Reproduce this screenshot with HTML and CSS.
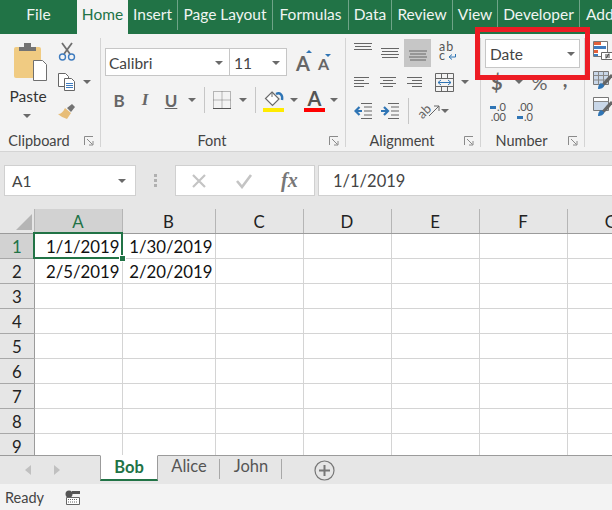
FILE: index.html
```html
<!DOCTYPE html>
<html lang="en">
<head>
    <meta charset="UTF-8">
    <title>Book1 - Excel</title>
    <link rel="stylesheet" href="styles.css">
</head>
<body>
    <nav class="tabs">
        <div class="tab tab-file">File</div>
        <div class="tab tab-home">Home</div>
        <div class="tab t-insert">Insert</div>
        <div class="tab t-layout">Page Layout</div>
        <div class="tab t-formulas">Formulas</div>
        <div class="tab t-data">Data</div>
        <div class="tab t-review">Review</div>
        <div class="tab t-view">View</div>
        <div class="tab t-dev">Developer</div>
        <div class="tab t-add">Add-ins</div>
    </nav>

    <section class="ribbon">
        <div class="group g-clipboard">
            <div class="group-body clip-body">
                <div class="paste">
                    <svg width="56" height="40" viewBox="0 0 56 40">
                        <rect x="14" y="6" width="27" height="31" rx="2" fill="#f0cb82"/>
                        <path d="M19 10V6h5V2h7v4h5v4z" fill="#737373"/>
                        <path d="M33.500 19.500h9l4 4v16h-13z" fill="#fff" stroke="#6f6f6f"/>
                    </svg>
                    <span class="paste-label">Paste</span>
                    <i class="caret"></i>
                </div>
                <div class="clip-tools">
                    <svg width="18" height="19" viewBox="0 0 18 19" fill="none">
                        <path d="M4 1l8 11M14 1L6 12" stroke="#6f6f6f" stroke-width="1.800"/>
                        <circle cx="4.500" cy="15" r="3" stroke="#3f7cbf" stroke-width="1.400"/>
                        <circle cx="13.500" cy="15" r="3" stroke="#3f7cbf" stroke-width="1.400"/>
                    </svg>
                    <div class="copy-row">
                        <svg width="18" height="18" viewBox="0 0 18 18" fill="#fff">
                            <path d="M.500.500h7l3 3v10h-10z" stroke="#666"/>
                            <path d="M6.500 5.500h7l3 3v9h-10z" stroke="#666"/>
                            <path d="M8 10.500h7M8 12.500h7M8 14.500h7" stroke="#3f7cbf" fill="none"/>
                        </svg>
                        <i class="caret copy-caret"></i>
                    </div>
                    <svg class="painter" width="18" height="16" viewBox="0 0 18 16">
                        <path d="M9 5l5-4 3 3-4 5z" fill="#737373"/>
                        <path d="M7 5l6 5-4 6c-3-1-7-3-9-5 3 0 5-2 7-6z" fill="#e7bd78"/>
                    </svg>
                </div>
            </div>
            <div class="group-label"><span>Clipboard</span>
                <svg class="launcher" width="10" height="10" viewBox="0 0 10 10" fill="none" stroke="#8a8a8a"><path d="M.500 9V.500H9M3 3l5.500 5.500M5 9h4V5"/></svg>
            </div>
        </div>

        <div class="group g-font">
            <div class="group-body">
                <div class="font-row">
                    <div class="combo combo-name"><span>Calibri</span><i class="caret"></i></div>
                    <div class="combo combo-size"><span>11</span><i class="caret"></i></div>
                    <div class="grow-a">A<i class="mini-up"></i></div>
                    <div class="shrink-a">A<i class="mini-down"></i></div>
                </div>
                <div class="style-row">
                    <b class="letter">B</b>
                    <em class="letter">I</em>
                    <u class="letter">U</u>
                    <i class="caret u-caret"></i>
                    <span class="sep s-one"></span>
                    <svg class="borders" width="18" height="18" viewBox="0 0 18 18" fill="none" stroke="#777" stroke-dasharray="1 1"><path d="M.500.500h17v17h-17zM9 .500v17M.500 9h17"/><path d="M0 17.500h18" stroke-dasharray="none" stroke="#555"/></svg>
                    <i class="caret b-caret"></i>
                    <span class="sep s-two"></span>
                    <div class="fill-icon">
                        <svg width="22" height="17" viewBox="0 0 22 17" fill="none">
                            <path d="M9 1l7 7-6.500 6.500L2.500 7.500z" fill="#fff" stroke="#6a6a6a" stroke-width="1.200"/>
                            <path d="M9 1v5" stroke="#6a6a6a"/>
                            <path d="M13 3c4-2 7 1 6 6" stroke="#2f75b5" stroke-width="2.400"/>
                        </svg>
                        <span class="bar bar-yellow"></span>
                    </div>
                    <i class="caret f-caret"></i>
                    <div class="color-a">A<span class="bar bar-red"></span></div>
                    <i class="caret c-caret"></i>
                </div>
            </div>
            <div class="group-label"><span>Font</span>
                <svg class="launcher" width="10" height="10" viewBox="0 0 10 10" fill="none" stroke="#8a8a8a"><path d="M.500 9V.500H9M3 3l5.500 5.500M5 9h4V5"/></svg>
            </div>
        </div>

        <div class="group g-align">
            <div class="group-body align-body">
                <div class="align-row row-top">
                    <svg width="18" height="16" viewBox="0 0 18 16" stroke="#666"><path d="M0 .500h18M1 3.500h16M0 6.500h18"/></svg>
                    <svg class="gap-9" width="18" height="16" viewBox="0 0 18 16" stroke="#666"><path d="M0 5.500h18M1 8.500h16M0 11.500h18M1 14.500h16"/></svg>
                    <div class="active-btn">
                        <svg width="18" height="16" viewBox="0 0 18 16" stroke="#666"><path d="M0 6h18M1 9h16M0 12h18M1 15h16"/></svg>
                    </div>
                    <div class="wrap-icon">
                        <span class="wrap-text">ab<br>c</span>
                        <svg width="8" height="6" viewBox="0 0 8 6" fill="none" stroke="#2f75b5"><path d="M7.500 0v3h-6M4 .500L1 3l3 2.500"/></svg>
                    </div>
                </div>
                <div class="align-row row-mid">
                    <svg width="15" height="11" viewBox="0 0 15 11" stroke="#666"><path d="M0 .500h15M0 3.500h10M0 6.500h15M0 9.500h10"/></svg>
                    <svg class="gap-12" width="16" height="11" viewBox="0 0 16 11" stroke="#666"><path d="M0 .500h16M3 3.500h10M0 6.500h16M3 9.500h10"/></svg>
                    <svg class="gap-12" width="15" height="11" viewBox="0 0 15 11" stroke="#666"><path d="M0 .500h15M5 3.500h10M0 6.500h15M5 9.500h10"/></svg>
                    <svg class="gap-13" width="19" height="19" viewBox="0 0 19 19" fill="none"><path d="M.500.500h18v18H.500zM.500 5.500h18M.500 13.500h18M6.500.500v5M12.500.500v5M6.500 13.500v5M12.500 13.500v5" stroke="#666"/><path d="M3 9.500h13M6 7L3 9.500 6 12M13 7l3 2.500-3 2.500" stroke="#2f75b5"/></svg>
                    <i class="caret merge-caret"></i>
                </div>
                <div class="align-row row-low">
                    <svg width="18" height="16" viewBox="0 0 18 16" fill="none"><path d="M7 .500h11M10 4h8M10 8h8M10 12h8M7 15.500h11" stroke="#666"/><path d="M8 8H2M5.500 4L1.500 8l4 4" stroke="#2f75b5" stroke-width="2.200"/></svg>
                    <svg class="gap-9" width="18" height="16" viewBox="0 0 18 16" fill="none"><path d="M7 .500h11M10 4h8M10 8h8M10 12h8M7 15.500h11" stroke="#666"/><path d="M0 8h6M3 4l4 4-4 4" stroke="#2f75b5" stroke-width="2.200"/></svg>
                    <span class="sep s-three"></span>
                    <div class="orient-icon"><span class="orient-text">ab</span>
                        <svg width="12" height="12" viewBox="0 0 12 12" fill="none" stroke="#666"><path d="M1 11L11 1M6 1h5v5"/></svg>
                    </div>
                    <i class="caret orient-caret"></i>
                </div>
            </div>
            <div class="group-label"><span>Alignment</span>
                <svg class="launcher" width="10" height="10" viewBox="0 0 10 10" fill="none" stroke="#8a8a8a"><path d="M.500 9V.500H9M3 3l5.500 5.500M5 9h4V5"/></svg>
            </div>
        </div>

        <div class="group g-number">
            <div class="group-body">
                <div class="combo combo-format"><span>Date</span><i class="caret"></i></div>
                <div class="num-row">
                    <span class="num-sym sym-dollar">$</span>
                    <i class="caret dollar-caret"></i>
                    <span class="num-sym sym-pct">%</span>
                    <span class="num-sym sym-comma">,</span>
                </div>
                <div class="dec-row">
                    <div class="dec-icon"><span class="dec-line"><i class="arrow-left"></i>.0</span><span class="dec-line">.00</span></div>
                    <div class="dec-icon dec-two"><span class="dec-line">.00</span><span class="dec-line"><i class="arrow-right"></i>.0</span></div>
                </div>
            </div>
            <div class="group-label"><span>Number</span>
                <svg class="launcher" width="10" height="10" viewBox="0 0 10 10" fill="none" stroke="#8a8a8a"><path d="M.500 9V.500H9M3 3l5.500 5.500M5 9h4V5"/></svg>
            </div>
        </div>

        <div class="g-styles">
            <svg class="st-cond" width="20" height="20" viewBox="0 0 20 20" fill="none"><path d="M.500.500h14v15H.500z" fill="#fff" stroke="#777"/><path d="M1 1h7v3H1z" fill="#e2603a"/><path d="M1 5h12v3H1z" fill="#3f7cbf"/><path d="M1 9h4v3H1z" fill="#e2603a"/><path d="M1 13h4v2H1z" fill="#3f7cbf"/><path d="M8.500 11.500h11v7h-11z" fill="#fff" stroke="#666"/><path d="M12 14h5M12 16h5M16 12.500l-3 5" stroke="#444"/></svg>
            <svg class="st-table" width="20" height="18" viewBox="0 0 20 18" fill="none"><path d="M.500.500h15v13H.500z" fill="#c9d7e8" stroke="#777"/><path d="M.500 4.500h15M.500 9h15M5.500.500v13M10.500.500v13" stroke="#888"/><path d="M8 14l6-7 4-4 2 2-4 5-6 6z" fill="#666"/><path d="M5 18c0-3 1-5 3-6l3 2c0 3-3 4-6 4z" fill="#2f75b5"/></svg>
            <svg class="st-cell" width="20" height="20" viewBox="0 0 20 20" fill="none"><path d="M.500.500h15v13H.500z" fill="#c9d7e8" stroke="#777"/><path d="M1 1h14v3H1z" fill="#fff"/><path d="M.500 4.500h15" stroke="#888"/><path d="M8 15l6-7 4-4 2 2-4 5-6 6z" fill="#666"/><path d="M5 19c0-3 1-5 3-6l3 2c0 3-3 4-6 4z" fill="#2f75b5"/></svg>
        </div>
    </section>

    <!-- highlight drawn on top of the ribbon -->
    <div class="red-box"></div>

    <section class="formula-bar">
        <div class="name-box"><span>A1</span><i class="caret"></i></div>
        <div class="grip"></div>
        <div class="fx-buttons">
            <svg width="16" height="16" viewBox="0 0 16 16" stroke="#c4c4c4" stroke-width="2.200"><path d="M2 2l12 12M14 2L2 14"/></svg>
            <svg width="18" height="16" viewBox="0 0 18 16" fill="none" stroke="#c4c4c4" stroke-width="2.600"><path d="M2 8l5 6L16 2"/></svg>
            <span class="fx">fx</span>
        </div>
        <div class="formula-input">1/1/2019</div>
    </section>

    <section class="sheet">
        <table class="cells">
            <tr class="col-heads">
                <th class="corner"><svg width="18" height="18" viewBox="0 0 18 18"><path d="M17 1v16H1z" fill="#b5b5b5"/></svg></th>
                <th class="picked">A</th><th class="wide">B</th><th>C</th><th>D</th><th>E</th><th>F</th><th>G</th>
            </tr>
            <tr><th class="picked row-head">1</th><td class="selected">1/1/2019<i class="handle"></i></td><td>1/30/2019</td><td></td><td></td><td></td><td></td><td></td></tr>
            <tr><th class="row-head">2</th><td>2/5/2019</td><td>2/20/2019</td><td></td><td></td><td></td><td></td><td></td></tr>
            <tr><th class="row-head">3</th><td></td><td></td><td></td><td></td><td></td><td></td><td></td></tr>
            <tr><th class="row-head">4</th><td></td><td></td><td></td><td></td><td></td><td></td><td></td></tr>
            <tr><th class="row-head">5</th><td></td><td></td><td></td><td></td><td></td><td></td><td></td></tr>
            <tr><th class="row-head">6</th><td></td><td></td><td></td><td></td><td></td><td></td><td></td></tr>
            <tr><th class="row-head">7</th><td></td><td></td><td></td><td></td><td></td><td></td><td></td></tr>
            <tr><th class="row-head">8</th><td></td><td></td><td></td><td></td><td></td><td></td><td></td></tr>
            <tr><th class="row-head">9</th><td></td><td></td><td></td><td></td><td></td><td></td><td></td></tr>
        </table>
    </section>

    <section class="sheet-tabs">
        <i class="nav-left"></i>
        <i class="nav-right"></i>
        <div class="sheet-tab current">Bob</div>
        <div class="sheet-tab alice">Alice</div>
        <div class="sheet-tab john">John</div>
        <svg class="add-sheet" width="21" height="21" viewBox="0 0 21 21" fill="none" stroke="#777"><circle cx="10.500" cy="10.500" r="9.500" stroke-width="1.200"/><path d="M10.500 5v11M5 10.500h11" stroke-width="2"/></svg>
    </section>

    <footer class="status">
        <span>Ready</span>
        <svg width="16" height="15" viewBox="0 0 16 15"><circle cx="4" cy="4" r="3.500" fill="#555"/><path d="M7 1h8v3H7z" fill="#555"/><path d="M1.500 7.500h13v7h-13z" fill="#fff" stroke="#666"/><path d="M3 9.500h10M3 12h10" stroke="#666" stroke-dasharray="1 1"/></svg>
    </footer>
</body>
</html>
```

FILE: styles.css
```css
* {
    box-sizing: border-box;
}
body {
    margin: 0;
    width: 612px;
    height: 510px;
    overflow: hidden;
    position: relative;
    background: #e6e6e6;
    font-family: Lato, 'Open Sans', sans-serif;
    font-size: 15px;
    color: #444;
}
i {
    font-style: normal;
}

/* tabs */
.tabs {
    display: flex;
    height: 34px;
    background: #217346;
    color: #f0f5f2;
    white-space: nowrap;
    overflow: hidden;
}
.tab {
    flex: none;
    height: 30px;
    line-height: 29px;
    text-align: center;
    border-right: 1px solid #6fa488;
    font-size: 15.500px;
}
.tab-file { width: 77px; border: 0; height: 34px; }
.tab-home { width: 51px; height: 34px; background: #f3f3f3; color: #217346; border: 0; }
.t-insert { width: 50px; }
.t-layout { width: 95px; }
.t-formulas { width: 76px; }
.t-data { width: 43px; }
.t-review { width: 61px; }
.t-view { width: 45px; }
.t-dev { width: 82px; }
.t-add { width: 60px; border: 0; text-align: left; padding-left: 6px; }

/* ribbon */
.ribbon {
    display: flex;
    height: 118px;
    padding-top: 4px;
    background: #f3f3f3;
    border-bottom: 1px solid #d4d4d4;
    overflow: hidden;
}
.group {
    flex: none;
    display: flex;
    flex-direction: column;
    height: 109px;
    border-right: 1px solid #d4d4d4;
}
.group-body {
    flex: 1;
}
.group-label {
    display: grid;
    grid-template-columns: 1fr auto 1fr;
    align-items: center;
    height: 12px;
    padding-right: 22px;
    font-size: 14.500px;
    line-height: 12px;
}
.group-label span {
    grid-column: 2;
}
.launcher {
    grid-column: 3;
    justify-self: end;
    margin-right: -16px;
}
.g-clipboard { width: 101px; }
.g-font { width: 245px; }
.g-align { width: 135px; }
.g-number { width: 104px; }
.g-styles {
    flex: none;
    width: 28px;
    padding: 3px 0 0 8px;
}
.g-styles svg {
    display: block;
}
.st-table { margin-top: 10px; }
.st-cell { margin-top: 8px; }
.caret {
    display: block;
    flex: none;
    width: 0;
    height: 0;
    border-left: 4px solid transparent;
    border-right: 4px solid transparent;
    border-top: 4px solid #6a6a6a;
}

/* clipboard */
.clip-body {
    display: flex;
}
.paste {
    display: flex;
    flex-direction: column;
    align-items: center;
    width: 56px;
    margin-top: 3px;
}
.paste svg {
    margin-bottom: 5px;
}
.paste-label {
    font-size: 15.500px;
    line-height: 20px;
    color: #333;
}
.paste .caret {
    margin-top: 8px;
    margin-left: -2px;
}
.clip-tools {
    margin: 4px 0 0 2px;
}
.clip-tools svg {
    display: block;
}
.copy-row {
    display: flex;
    align-items: center;
    margin-top: 12px;
}
.copy-caret {
    margin-left: 7px;
}
.painter {
    margin-top: 12px;
}

/* font */
.font-row {
    display: flex;
    margin: 10px 0 0 4px;
}
.combo {
    display: flex;
    align-items: center;
    justify-content: space-between;
    height: 28px;
    padding: 1px 6px 0 3px;
    background: #fff;
    border: 1px solid #c6c6c6;
    font-size: 15.500px;
    color: #444;
}
.combo-name { width: 125px; }
.combo-size { width: 57px; padding-left: 4px; border-left: 0; }
.grow-a, .shrink-a {
    position: relative;
    font-weight: bold;
    color: #666;
    line-height: 1;
}
.grow-a {
    margin: 5px 0 0 9px;
    font-size: 20px;
}
.shrink-a {
    margin: 8px 0 0 8px;
    font-size: 16px;
}
.mini-up, .mini-down {
    position: absolute;
    right: -2px;
    width: 0;
    height: 0;
    border-left: 3px solid transparent;
    border-right: 3px solid transparent;
}
.mini-up { top: -3px; border-bottom: 3px solid #2f75b5; }
.mini-down { top: -2px; border-top: 3px solid #2f75b5; }
.style-row {
    display: flex;
    align-items: center;
    height: 26px;
    margin: 11px 0 0 5px;
}
.letter {
    width: 26px;
    text-align: center;
    font-family: 'Liberation Serif', serif;
    font-size: 17px;
    font-weight: bold;
    color: #666;
}
.style-row b.letter,
.style-row u.letter {
    font-family: Lato, sans-serif;
}
.u-caret { margin-left: 4px; }
.sep {
    flex: none;
    display: block;
    width: 1px;
    height: 26px;
    background: #c6c6c6;
}
.s-one { margin-left: 8px; }
.borders { margin-left: 8px; }
.b-caret { margin-left: 8px; }
.s-two { margin-left: 8px; }
.fill-icon {
    display: flex;
    flex-direction: column;
    margin-left: 7px;
    margin-top: 2px;
}
.bar {
    display: block;
    height: 4px;
}
.bar-yellow {
    width: 21px;
    background: #ffeb00;
}
.f-caret { margin-left: 5px; }
.color-a {
    width: 21px;
    margin-left: 6px;
    font-size: 20px;
    line-height: 18px;
    font-weight: bold;
    text-align: center;
    color: #555;
}
.bar-red {
    background: #f00;
    margin-top: 1px;
}
.c-caret { margin-left: 5px; }

/* alignment */
.align-body {
    padding-left: 8px;
}
.align-row {
    display: flex;
}
.align-row svg {
    flex: none;
}
.gap-9 { margin-left: 9px; }
.gap-12 { margin-left: 11px; }
.gap-13 { margin-left: 13px; }
.row-top {
    height: 30px;
    margin-top: 1px;
}
.row-top > svg {
    margin-top: 4px;
}
.active-btn {
    width: 27px;
    height: 28px;
    margin-left: 5px;
    padding: 6px 0 0 5px;
    background: #c6c6c6;
}
.wrap-icon {
    display: flex;
    align-items: flex-end;
    height: 17px;
    margin: 4px 0 0 8px;
}
.wrap-text {
    width: 9px;
    font-size: 12.500px;
    line-height: 9px;
    color: #555;
    letter-spacing: 1px;
}
.row-mid {
    align-items: center;
    height: 20px;
    margin-top: 3px;
}
.merge-caret { margin-left: 7px; }
.row-low {
    align-items: center;
    height: 26px;
    margin-top: 6px;
}
.s-three { margin-left: 9px; }
.orient-icon {
    display: flex;
    align-items: center;
    width: 20px;
    margin-left: 8px;
}
.orient-text {
    font-size: 13px;
    transform: rotate(-45deg);
    color: #666;
}
.orient-icon svg {
    margin-left: -3px;
}
.orient-caret { margin-left: 4px; }

/* number */
.combo-format {
    width: 95px;
    height: 29px;
    margin: 1px 0 0 4px;
    padding: 0 4px;
}
.num-row {
    display: flex;
    align-items: center;
    height: 24px;
    margin-top: 2px;
    padding-left: 10px;
}
.num-sym {
    font-size: 20px;
    font-weight: bold;
    color: #666;
    line-height: 24px;
}
.dollar-caret { margin-left: 12px; }
.sym-pct { margin-left: 9px; font-weight: normal; }
.sym-comma { margin-left: 15px; margin-top: -6px; }
.dec-row {
    display: flex;
    margin: 8px 0 0 9px;
}
.dec-icon {
    display: flex;
    flex-direction: column;
    width: 16px;
    font-size: 11px;
    color: #555;
}
.dec-line {
    display: flex;
    align-items: center;
    justify-content: flex-end;
    height: 10px;
    line-height: 10px;
}
.dec-two {
    margin-left: 11px;
}
.arrow-left, .arrow-right {
    display: block;
    width: 7px;
    height: 3px;
    margin-right: 1px;
    background: #2f75b5;
}

/* red highlight */
.red-box {
    position: absolute;
    left: 475px;
    top: 27px;
    width: 115px;
    height: 53px;
    border: 5px solid #ed1c24;
}

/* formula bar */
.formula-bar {
    display: flex;
    align-items: center;
    height: 57px;
    padding-left: 4px;
}
.name-box, .fx-buttons, .formula-input {
    height: 31px;
    background: #fff;
    border: 1px solid #d0d0d0;
}
.name-box {
    display: flex;
    align-items: center;
    justify-content: space-between;
    width: 132px;
    padding: 1px 9px 0 7px;
    font-size: 15.500px;
}
.grip {
    width: 3px;
    height: 13px;
    margin: 0 18px;
    background: repeating-linear-gradient(#b0b0b0 0 3px, transparent 3px 5px);
}
.fx-buttons {
    display: flex;
    align-items: center;
    width: 140px;
    padding-left: 15px;
}
.fx-buttons svg + svg {
    margin-left: 28px;
}
.fx {
    margin-left: 28px;
    font-family: 'Liberation Serif', serif;
    font-size: 20px;
    font-style: italic;
    font-weight: bold;
    color: #777;
}
.formula-input {
    flex: 1;
    margin-left: 3px;
    margin-right: -4px;
    padding-left: 14px;
    line-height: 31px;
    font-size: 16.500px;
    color: #444;
}

/* grid */
.sheet {
    height: 246px;
    overflow: hidden;
    background: #fff;
}
.cells {
    border-collapse: collapse;
    table-layout: fixed;
    width: 654px;
    font-size: 16.800px;
    color: #111;
}
.cells th {
    width: 88px;
    padding: 2px 0 0;
    height: 25px;
    font-weight: normal;
    background: #e6e6e6;
    color: #222;
    border-right: 1px solid #a8a8a8;
    border-bottom: 1px solid #9b9b9b;
}
.cells .corner {
    width: 34px;
    text-align: right;
    padding: 3px 1px 0 0;
}
.cells .corner svg {
    display: block;
    margin-left: auto;
}
.cells .wide {
    width: 93px;
}
.col-heads th {
    height: 24px;
    border-right-color: #b5b5b5;
}
.cells .row-head {
    width: 34px;
    border-right: 1px solid #9b9b9b;
    border-bottom: 1px solid #a8a8a8;
}
.cells .picked {
    background: #d2d2d2;
    color: #217346;
}
.cells td {
    position: relative;
    height: 25px;
    padding: 2px 2px 0 0;
    text-align: right;
    border-right: 1px solid #d4d4d4;
    border-bottom: 1px solid #d4d4d4;
    white-space: nowrap;
}
.cells .selected {
    outline: 2px solid #217346;
    outline-offset: -1px;
}
.handle {
    position: absolute;
    right: -4px;
    bottom: -4px;
    width: 7px;
    height: 7px;
    background: #217346;
    border: 1px solid #fff;
}

/* sheet tabs */
.sheet-tabs {
    display: flex;
    align-items: flex-start;
    height: 29px;
    background: #e6e6e6;
    border-top: 1px solid #9b9b9b;
}
.nav-left, .nav-right {
    width: 0;
    height: 0;
    margin-top: 9px;
    border-top: 5px solid transparent;
    border-bottom: 5px solid transparent;
}
.nav-left {
    margin-left: 25px;
    border-right: 6px solid #c0c0c0;
}
.nav-right {
    margin-left: 23px;
    border-left: 6px solid #c0c0c0;
}
.sheet-tab {
    height: 26px;
    line-height: 21px;
    font-size: 16.500px;
    text-align: center;
    color: #555;
}
.current {
    width: 58px;
    height: 26px;
    margin-top: -1px;
    margin-left: 40px;
    padding-top: 1px;
    background: #fff;
    color: #217346;
    font-weight: bold;
    border: 1px solid #9b9b9b;
    border-top-color: #fff;
    border-bottom: 2px solid #217346;
}
.alice, .john {
    position: relative;
    width: 62px;
}
.alice::after, .john::after {
    content: "";
    position: absolute;
    right: 0;
    top: 3px;
    width: 1px;
    height: 20px;
    background: #a8a8a8;
}
.add-sheet {
    margin: 4px 0 0 32px;
}

/* status bar */
.status {
    display: flex;
    align-items: center;
    gap: 21px;
    height: 26px;
    padding: 1px 5px 0;
    background: #f3f3f3;
    font-size: 14.500px;
    color: #444;
}
```
